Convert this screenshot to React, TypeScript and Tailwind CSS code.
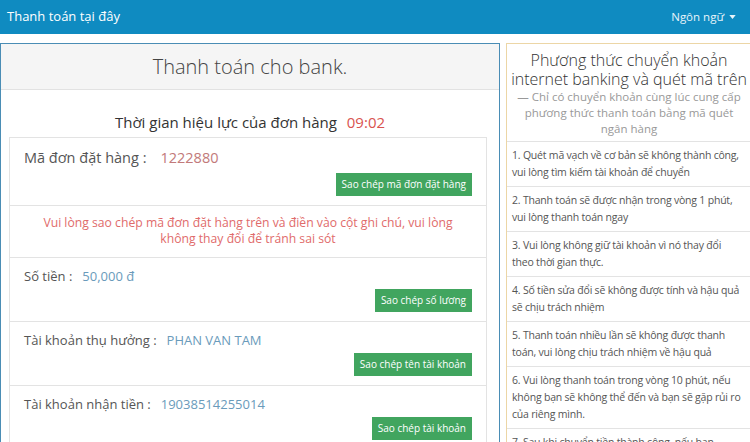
const rules = [
  "1. Quét mã vạch về cơ bản sẽ không thành công, vui lòng tìm kiếm tài khoản để chuyển",
  "2. Thanh toán sẽ được nhận trong vòng 1 phút, vui lòng thanh toán ngay",
  "3. Vui lòng không giữ tài khoản vì nó thay đổi theo thời gian thực.",
  "4. Số tiền sửa đổi sẽ không được tính và hậu quả sẽ chịu trách nhiệm",
  "5. Thanh toán nhiều lần sẽ không được thanh toán, vui lòng chịu trách nhiệm về hậu quả",
  "6. Vui lòng thanh toán trong vòng 10 phút, nếu không bạn sẽ không thể đến và bạn sẽ gặp rủi ro của riêng mình.",
  "7. Sau khi chuyển tiền thành công, nếu bạn không nhận được tiền vui lòng liên hệ",
];

function InfoRow({ label, value, big, valueClass, button }: { label: string; value: string; big?: boolean; valueClass: string; button: string }) {
  return (
    <div className={`border-b border-[#e3e3e3] px-[14px] pb-[9px] ${big ? "pt-[10px]" : "pt-[8px]"}`}>
      <div className={`${big ? "text-[14.5px]" : "text-[13px]"} leading-[20px] text-[#555]`}>
        {label} :<span className={`${big ? "ml-[14px]" : "ml-[10px]"} ${valueClass}`}>{value}</span>
      </div>
      <div className={`${big ? "mt-[5px]" : "mt-[3px]"} flex justify-end`}>
        <button className="h-[23px] bg-[#41a55f] px-[6px] text-[10px] text-white">{button}</button>
      </div>
    </div>
  );
}

export default function App() {
  return (
    <div className="h-[442px] w-[750px] overflow-hidden bg-white font-['Open_Sans',sans-serif]">
      <nav className="flex h-[34px] items-center justify-between bg-[#0f8bc1] pl-[7px] pr-[14px] text-white">
        <span className="text-[13px]">Thanh toán tại đây</span>
        <span className="flex items-center gap-[5px] text-[11.5px] text-[#e8f4fa]">
          Ngôn ngữ
          <svg width="7" height="4" viewBox="0 0 8 5"><path d="M0 0h8L4 5z" fill="currentColor" /></svg>
        </span>
      </nav>

      <div className="mt-[9px] flex gap-[6px]">
        <div className="w-[500px] shrink-0 border border-[#4a8db5] pb-[10px]">
          <div className="flex h-[46px] items-center justify-center border-b border-[#e2e2e2] bg-[#f5f5f5] text-[20px] font-light text-[#444]">
            Thanh toán cho bank.
          </div>
          <div className="mt-[21px] text-center text-[15px] leading-[22px] text-[#333]">
            Thời gian hiệu lực của đơn hàng <span className="ml-[6px] text-[#d9534f]">09:02</span>
          </div>
          <div className="ml-[8px] mr-[12px] mt-[4px] border border-[#e3e3e3]">
            <InfoRow label="Mã đơn đặt hàng" value="1222880" big valueClass="text-[#c27a7a]" button="Sao chép mã đơn đặt hàng" />
            <div className="border-b border-[#e3e3e3] px-[24px] pt-[9px] pb-[10px] text-center text-[12.2px] leading-[16px] text-[#df6b6b]">
              Vui lòng sao chép mã đơn đặt hàng trên và điền vào cột ghi chú, vui lòng không thay đổi để tránh sai sót
            </div>
            <InfoRow label="Số tiền" value="50,000 đ" valueClass="text-[#6a9bbb]" button="Sao chép số lương" />
            <InfoRow label="Tài khoản thụ hưởng" value="PHAN VAN TAM" valueClass="text-[#6a9bbb]" button="Sao chép tên tài khoản" />
            <InfoRow label="Tài khoản nhận tiền" value="19038514255014" valueClass="text-[#6a9bbb]" button="Sao chép tài khoản" />
          </div>
        </div>

        <div className="w-[246px] shrink-0 border border-[#ecd6a6]">
          <div className="border-b border-[#e3e3e3] pt-[7px] pb-[4px] text-center">
            <div className="text-[16px] font-light leading-[19px] text-[#333]">
              Phương thức chuyển khoản internet banking và quét mã trên
            </div>
            <div className="px-[9px] text-[11.5px] leading-[16px] text-[#999]">
              — Chỉ có chuyển khoản cùng lúc cung cấp phương thức thanh toán bằng mã quét ngân hàng
            </div>
          </div>
          {rules.map((r) => (
            <div key={r} className="border-b border-[#e3e3e3] py-[5px] pl-[5px] pr-[8px] text-[10.5px] leading-[17px] tracking-[-0.2px] text-[#555]">
              {r}
            </div>
          ))}
        </div>
      </div>
    </div>
  );
}
